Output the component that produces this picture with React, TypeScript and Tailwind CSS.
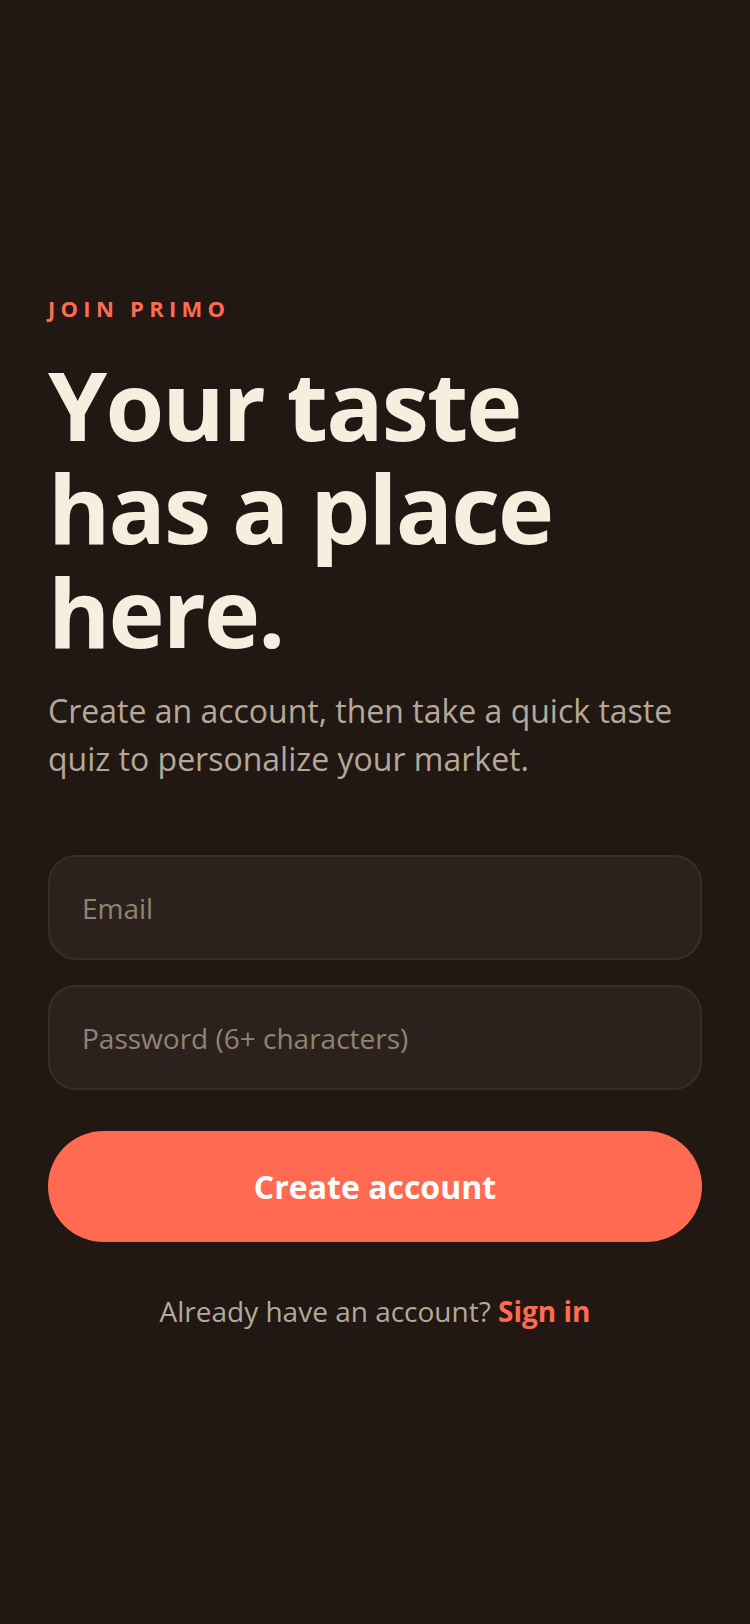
import { useState } from "react";

export default function App() {
  const [email, setEmail] = useState("");
  const [password, setPassword] = useState("");

  return (
    <div className="flex min-h-screen w-full flex-col justify-center bg-[#211814] px-12 font-['Open_Sans',sans-serif]">
      <p className="text-[22px] font-bold uppercase tracking-[0.24em] text-[#ff6b52]">Join Primo</p>

      <h1 className="mt-[28px] text-[95px] leading-[1.09] font-bold tracking-[-0.02em] text-[#f6eedf]">
        Your taste
        <br />
        has a place
        <br />
        here.
      </h1>

      <p className="mt-[24px] text-[32px] leading-[1.5] text-[#b6a899]">
        Create an account, then take a quick taste quiz to personalize your market.
      </p>

      <form className="mt-[72px] flex flex-col" onSubmit={(e) => e.preventDefault()}>
        <input
          type="email"
          value={email}
          onChange={(e) => setEmail(e.target.value)}
          placeholder="Email"
          className="h-[105px] w-full rounded-[28px] border-2 border-[#3a2d27] bg-[#2c221d] px-[32px] text-[28px] text-[#f6eedf] outline-none placeholder:text-[#928271]"
        />
        <input
          type="password"
          value={password}
          onChange={(e) => setPassword(e.target.value)}
          placeholder="Password (6+ characters)"
          className="mt-[25px] h-[105px] w-full rounded-[28px] border-2 border-[#3a2d27] bg-[#2c221d] px-[32px] text-[28px] text-[#f6eedf] outline-none placeholder:text-[#928271]"
        />
        <button
          type="submit"
          className="mt-[41px] h-[111px] w-full rounded-full bg-[#ff6a51] text-[32px] font-bold text-white"
        >
          Create account
        </button>
      </form>

      <p className="mt-[48px] text-center text-[28px] text-[#b6a899]">
        Already have an account? <a href="#" className="font-bold text-[#ff6a51]">Sign in</a>
      </p>
    </div>
  );
}
